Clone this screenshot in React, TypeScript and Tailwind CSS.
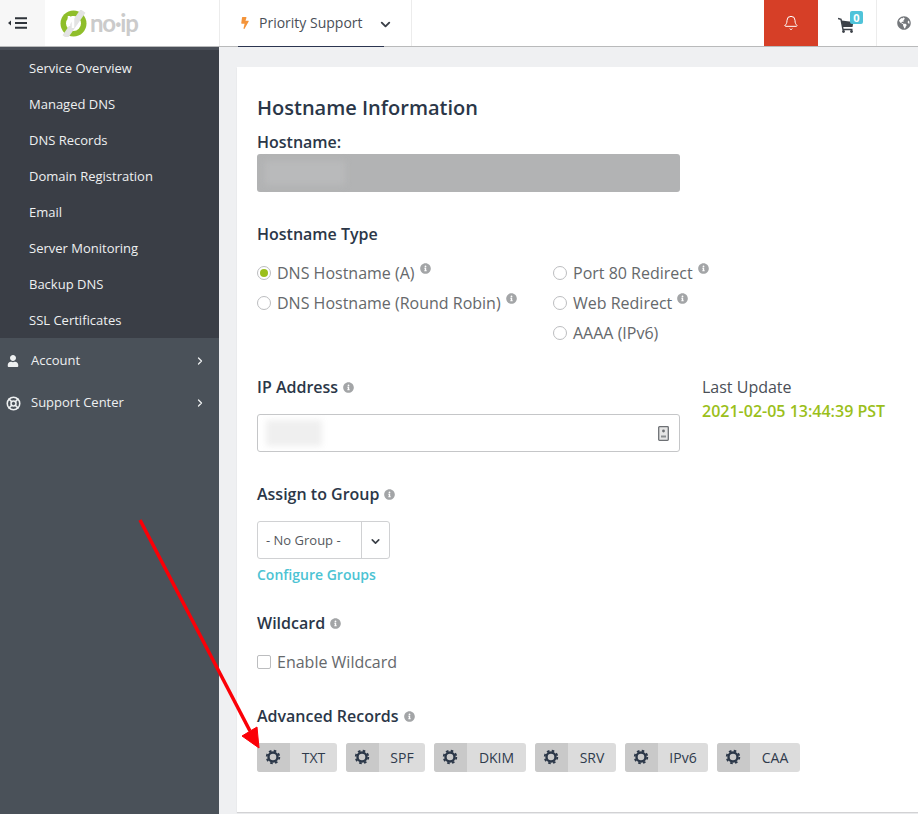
import { Bell, ChevronDown, ChevronRight, LifeBuoy } from "lucide-react";
import { FaBolt, FaGlobeAmericas, FaInfoCircle, FaUser } from "react-icons/fa";

const serviceLinks = [
  "Service Overview",
  "Managed DNS",
  "DNS Records",
  "Domain Registration",
  "Email",
  "Server Monitoring",
  "Backup DNS",
  "SSL Certificates",
];

const records = [
  { label: "TXT", width: "w-[80px]" },
  { label: "SPF", width: "w-[79px]" },
  { label: "DKIM", width: "w-[92px]" },
  { label: "SRV", width: "w-[81px]" },
  { label: "IPv6", width: "w-[83px]" },
  { label: "CAA", width: "w-[83px]" },
];

function Info({ className = "" }: { className?: string }) {
  return <FaInfoCircle size={11} className={`shrink-0 text-[#a3a5a7] ${className}`} />;
}

function Gear() {
  return (
    <svg width="16" height="16" viewBox="0 0 16 16" fill="none" stroke="#2b3748">
      <circle cx="8" cy="8" r="4.500" strokeWidth="2.400" />
      <circle cx="8" cy="8" r="6.300" strokeWidth="1.800" strokeDasharray="2.600 2.350" />
    </svg>
  );
}

function Radio({ label, checked, info }: { label: string; checked?: boolean; info?: boolean }) {
  return (
    <div className="flex h-[30px] items-center">
      <span className="flex h-[14px] w-[14px] items-center justify-center rounded-full border border-[#bcbdbf] bg-white">
        {checked && <span className="h-[8px] w-[8px] rounded-full bg-[#9bbf1b]" />}
      </span>
      <span className="ml-[6px] text-[16px] text-[#65686b]">{label}</span>
      {info && <Info className="mb-[10px] ml-[5px]" />}
    </div>
  );
}

function Heading({ children, info }: { children: string; info?: boolean }) {
  return (
    <div className="flex h-[22px] items-center text-[16px] font-semibold text-[#2b3748]">
      {children}
      {info && <Info className="ml-[5px] mt-[1px]" />}
    </div>
  );
}

function Header() {
  return (
    <header className="relative z-10 flex h-[47px] shrink-0 border-b border-[#b9babb] bg-white">
      <div className="flex w-[45px] items-center bg-[#f7f7f7] pb-[1px] pl-[8px]">
        <svg width="20" height="12" viewBox="0 0 20 12">
          <path d="M0 6l3-2.500v5z" fill="#2f343b" />
          <path d="M7 1.200h12M7 6h12M7 10.800h12" stroke="#2f343b" strokeWidth="2" />
        </svg>
      </div>
      <div className="flex w-[174px] items-center pl-[15px]">
        <svg width="27" height="27" viewBox="0 0 27 27">
          <circle cx="13.500" cy="13.500" r="13" fill="#8fbe2a" />
          <circle cx="13.500" cy="13.500" r="7.500" fill="#fff" />
          <path d="M5 27L23 1" stroke="#e3e3e3" strokeWidth="6" />
          <path d="M9 6v10M13 6v12" stroke="#fff" strokeWidth="2.500" />
        </svg>
        <span className="ml-[3px] font-['Lato',sans-serif] text-[24px] font-bold leading-none tracking-[-1.200px] text-[#cbcbcb]">
          no·ip
        </span>
      </div>
      <div className="relative flex w-[193px] items-center border-x border-[#ececec] pb-[1px] pl-[19px]">
        <FaBolt size={12} className="text-[#f4943a]" />
        <span className="ml-[8px] text-[14px] text-[#4a4f57]">Priority Support</span>
        <ChevronDown size={15} strokeWidth={3} className="ml-[15px] mt-[3px] text-[#3a3f47]" />
        <div className="absolute -bottom-px left-[18px] h-[1px] w-[146px] bg-[#2b3550]" />
      </div>
      <div className="flex-1" />
      <div className="flex w-[54px] items-center justify-center bg-[#d63f27] pr-[1px] text-white">
        <Bell size={16} strokeWidth={1.500} />
      </div>
      <div className="relative flex w-[59px] items-center justify-center border-r border-[#ececec]">
        <svg width="16" height="16" viewBox="0 0 16 16" className="mr-[3px] mt-[3px]">
          <path d="M0 1.500L3 2.300L5 12.500H14.500" fill="none" stroke="#3c4148" strokeWidth="1.400" />
          <path d="M3.500 3.500L15.500 5L14.500 10H4.500z" fill="#3c4148" />
          <circle cx="5.500" cy="14.500" r="1.400" fill="#3c4148" />
          <circle cx="13.500" cy="14.500" r="1.400" fill="#3c4148" />
        </svg>
        <span className="absolute left-[32px] top-[11px] flex h-[13px] w-[13px] items-center justify-center rounded-[2px] bg-[#4fc3d9] text-[11px] font-bold leading-none text-white">
          0
        </span>
      </div>
      <div className="flex w-[41px] items-center pl-[20px]">
        <FaGlobeAmericas size={14} className="text-[#75787c]" />
      </div>
    </header>
  );
}

function Sidebar() {
  return (
    <aside className="flex w-[219px] shrink-0 flex-col bg-[#4a5159] text-[13px] text-[#eef0f1]">
      <nav className="h-[291px] border-t-[3px] border-[#4a4f58] bg-[#3a3e46] pt-[1px]">
        {serviceLinks.map((link) => (
          <div key={link} className="flex h-[36px] items-center pl-[29px]">
            {link}
          </div>
        ))}
      </nav>
      <div className="flex h-[44px] items-center pl-[7px] pr-[13px] pt-[2px]">
        <FaUser size={12} />
        <span className="ml-[12px] flex-1">Account</span>
        <ChevronRight size={12} strokeWidth={2.500} />
      </div>
      <div className="flex h-[40px] items-center pl-[6px] pr-[13px] pt-[2px]">
        <LifeBuoy size={15} strokeWidth={2.500} />
        <span className="ml-[10px] flex-1">Support Center</span>
        <ChevronRight size={12} strokeWidth={2.500} />
      </div>
    </aside>
  );
}

function Form() {
  return (
    <section className="h-[745px] bg-white pl-[20px] pt-[27px] shadow-[0_1px_1px_rgba(0,0,0,0.12)]">
      <h1 className="h-[28px] text-[20px] font-semibold leading-[28px] text-[#2b3748]">Hostname Information</h1>
      <div className="mt-[9px]">
        <Heading>Hostname:</Heading>
      </div>
      <div className="mt-[1px] flex h-[38px] w-[423px] items-center rounded-[3px] bg-[#b2b3b4] pl-[8px]">
        <div className="h-[24px] w-[80px] bg-[#b9babb] blur-[3px]" />
      </div>

      <div className="mt-[31px]">
        <Heading>Hostname Type</Heading>
      </div>
      <div className="mt-[13px] flex">
        <div className="w-[296px]">
          <Radio label="DNS Hostname (A)" checked info />
          <Radio label="DNS Hostname (Round Robin)" info />
        </div>
        <div>
          <Radio label="Port 80 Redirect" info />
          <Radio label="Web Redirect" info />
          <Radio label="AAAA (IPv6)" />
        </div>
      </div>

      <div className="mt-[28px] flex">
        <div className="w-[445px]">
          <Heading info>IP Address</Heading>
          <div className="mt-[16px] flex h-[38px] w-[423px] items-center justify-between rounded-[3px] border border-[#c5c6c8] pl-[8px] pr-[10px]">
            <div className="h-[26px] w-[56px] bg-[#efefef] blur-[3px]" />
            <svg width="11" height="15" viewBox="0 0 11 15">
              <rect x="0.700" y="0.700" width="9.600" height="13.600" rx="0.800" fill="#e6e6e6" stroke="#6d7074" strokeWidth="1.300" />
              <circle cx="5.500" cy="5" r="1.400" fill="#6d7074" />
              <path d="M3 9.500h5v2H3z" fill="#8b8e91" />
            </svg>
          </div>
        </div>
        <div>
          <div className="flex h-[22px] items-center text-[16px] text-[#4a4f57]">Last Update</div>
          <div className="mt-[2px] text-[16px] font-semibold leading-[22px] text-[#9bbf1b]">2021-02-05 13:44:39 PST</div>
        </div>
      </div>

      <div className="mt-[31px]">
        <Heading info>Assign to Group</Heading>
      </div>
      <div className="mt-[16px] flex h-[38px] w-[133px] items-center rounded-[3px] border border-[#d0d1d3] text-[13px] text-[#55595e]">
        <span className="w-[103px] whitespace-nowrap pl-[8px] pt-[1px]">- No Group -</span>
        <div className="flex h-full flex-1 items-center justify-center border-l border-[#d0d1d3]">
          <ChevronDown size={13} strokeWidth={3} className="mt-[2px] text-[#3a3f47]" />
        </div>
      </div>
      <div className="mt-[6px] text-[14px] font-semibold leading-[20px] text-[#4cc3d3]">Configure Groups</div>

      <div className="mt-[27px]">
        <Heading info>Wildcard</Heading>
      </div>
      <div className="mt-[17px] flex h-[22px] items-center">
        <span className="h-[14px] w-[14px] rounded-[2px] border border-[#bcbdbf]" />
        <span className="ml-[6px] text-[16px] text-[#65686b]">Enable Wildcard</span>
      </div>

      <div className="mt-[32px]">
        <Heading info>Advanced Records</Heading>
      </div>
      <div className="mt-[16px] flex gap-[9px]">
        {records.map((record) => (
          <div key={record.label} className={`flex h-[29px] overflow-hidden rounded-[3px] bg-[#dcdcdc] text-[14px] text-[#2f3b4c] ${record.width}`}>
            <div className="flex w-[33px] shrink-0 items-center justify-center bg-[#c9c9c9] pb-[1px] pr-[1px]">
              <Gear />
            </div>
            <div className="flex flex-1 items-center justify-center pb-[1px]">{record.label}</div>
          </div>
        ))}
      </div>
    </section>
  );
}

export default function App() {
  return (
    <div className="relative flex h-[814px] w-[918px] flex-col overflow-hidden bg-[#eff0f2] font-['Open_Sans',sans-serif]">
      <Header />
      <div className="flex flex-1">
        <Sidebar />
        <main className="flex-1 pl-[18px] pt-[20px]">
          <Form />
        </main>
      </div>
      {/* red annotation arrow on top of the screenshot */}
      <svg className="absolute left-0 top-0" width="918" height="814" viewBox="0 0 918 814">
        <path d="M140 520L250 731" stroke="#fb0007" strokeWidth="3.500" />
        <path d="M259 748L242 736L257 727z" fill="#fb0007" stroke="#fb0007" strokeWidth="1" />
      </svg>
    </div>
  );
}
